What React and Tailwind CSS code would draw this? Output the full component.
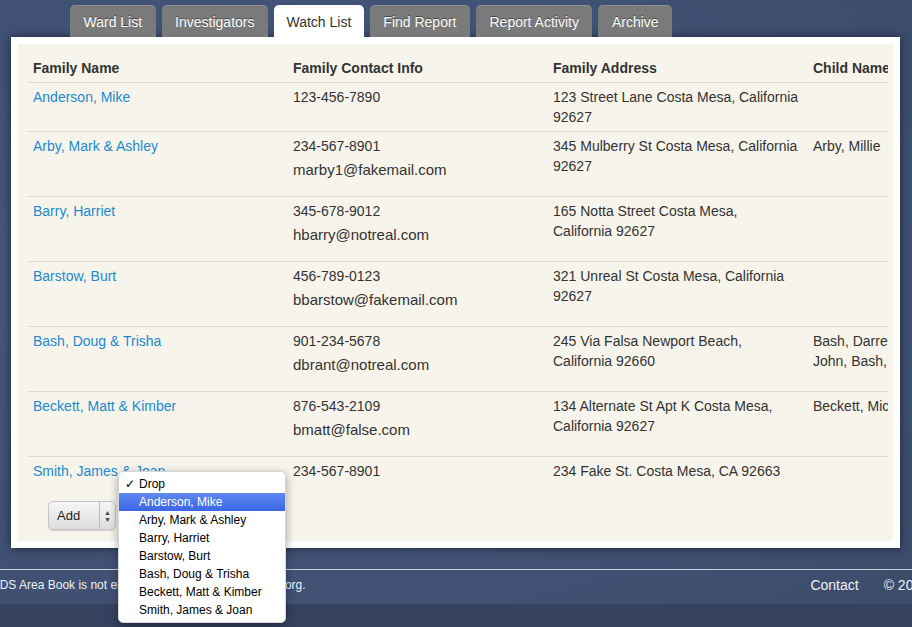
import React from "react";

const tabs = ["Ward List", "Investigators", "Watch List", "Find Report", "Report Activity", "Archive"];

const families = [
	{ name: "Anderson, Mike", phone: "123-456-7890", address: ["123 Street Lane Costa Mesa, California", "92627"], child: [] },
	{ name: "Arby, Mark & Ashley", phone: "234-567-8901", email: "marby1@fakemail.com", address: ["345 Mulberry St Costa Mesa, California", "92627"], child: ["Arby, Millie"] },
	{ name: "Barry, Harriet", phone: "345-678-9012", email: "hbarry@notreal.com", address: ["165 Notta Street Costa Mesa,", "California 92627"], child: [] },
	{ name: "Barstow, Burt", phone: "456-789-0123", email: "bbarstow@fakemail.com", address: ["321 Unreal St Costa Mesa, California", "92627"], child: [] },
	{ name: "Bash, Doug & Trisha", phone: "901-234-5678", email: "dbrant@notreal.com", address: ["245 Via Falsa Newport Beach,", "California 92660"], child: ["Bash, Darren,", "John, Bash, Emily"] },
	{ name: "Beckett, Matt & Kimber", phone: "876-543-2109", email: "bmatt@false.com", address: ["134 Alternate St Apt K Costa Mesa,", "California 92627"], child: ["Beckett, Michael"] },
	{ name: "Smith, James & Joan", phone: "234-567-8901", address: ["234 Fake St. Costa Mesa, CA 92663"], child: [] },
];

const options = [
	"Anderson, Mike",
	"Arby, Mark & Ashley",
	"Barry, Harriet",
	"Barstow, Burt",
	"Bash, Doug & Trisha",
	"Beckett, Matt & Kimber",
	"Smith, James & Joan",
];

const Tab = ({ label, active }) => (
	<div
		className={
			active
				? "h-[32px] px-[12.5px] pt-[3px] flex items-center rounded-t-[5px] bg-white text-[#333] text-[14px]"
				: "h-[32px] px-[13.5px] pt-[3px] flex items-center rounded-t-[5px] bg-[#7a7a7a] text-white text-[14px] font-medium [text-shadow:0_-1px_0_rgba(0,0,0,0.45)] shadow-[inset_0_1px_0_rgba(255,255,255,0.15)]"
		}
	>
		{label}
	</div>
);

const Row = ({ f, first }) => (
	<tr className={first ? "" : "border-t border-[#dcdad3]"}>
		<td className="pl-[5px] pt-[4px] pb-[4px] align-top leading-[20px]">
			<a className="text-[#1a8ad0]">{f.name}</a>
		</td>
		<td className="pl-[5px] pt-[4px] pb-[4px] align-top leading-[20px]">
			<div>{f.phone}</div>
			{f.email && <div className="text-[15px] leading-[27px] mb-[9px]">{f.email}</div>}
		</td>
		<td className="pl-[5px] pt-[4px] pb-[4px] align-top leading-[20px]">
			{f.address.map((a) => (
				<div key={a}>{a}</div>
			))}
		</td>
		<td className="pl-[5px] pt-[4px] pb-[4px] align-top leading-[20px] whitespace-nowrap">
			{f.child.map((c) => (
				<div key={c}>{c}</div>
			))}
		</td>
	</tr>
);

export default function App() {
	return (
		<div className="relative w-[912px] h-[627px] overflow-hidden font-['Liberation_Sans',Arial,sans-serif] bg-[radial-gradient(ellipse_at_35%_45%,#4d6187_0%,#43557a_45%,#3b4b69_100%)]">
			{/* tabs */}
			<div className="flex gap-[6px] pl-[70px] pt-[5px]">
				{tabs.map((t) => (
					<Tab key={t} label={t} active={t === "Watch List"} />
				))}
			</div>

			{/* main card */}
			<div className="mx-[11px] w-[889px] bg-white p-[7px] shadow-[0_0_10px_rgba(0,0,0,0.55)]">
				<div className="bg-[#f7f4ec] h-[497px] pt-[6px] pl-[10px] pr-[5px]">
					<div className="w-[860px] overflow-hidden">
						<table className="table-fixed w-[1040px] text-[14px] text-[#333] border-collapse">
							<colgroup>
								<col className="w-[260px]" />
								<col className="w-[260px]" />
								<col className="w-[260px]" />
								<col className="w-[260px]" />
							</colgroup>
							<thead>
								<tr className="border-b border-[#dcdad3]">
									<th className="text-left font-bold pl-[5px] pt-[8px] pb-[4px] leading-[20px] whitespace-nowrap">Family Name</th>
									<th className="text-left font-bold pl-[5px] pt-[8px] pb-[4px] leading-[20px] whitespace-nowrap">Family Contact Info</th>
									<th className="text-left font-bold pl-[5px] pt-[8px] pb-[4px] leading-[20px] whitespace-nowrap">Family Address</th>
									<th className="text-left font-bold pl-[5px] pt-[8px] pb-[4px] leading-[20px] whitespace-nowrap">Child Name</th>
								</tr>
							</thead>
							<tbody>
								{families.map((f, i) => (
									<Row key={f.name} f={f} first={i === 0} />
								))}
							</tbody>
						</table>
					</div>

					{/* add select */}
					<div className="mt-[16px] ml-[20px] w-[68px] h-[29px] flex items-center rounded-[5px] border border-[#c4c4c4] bg-[linear-gradient(#f6f6f6,#dedede)] shadow-[0_1px_1px_rgba(0,0,0,0.15)]">
						<span className="flex-1 pl-[8px] text-[13px] text-[#222]">Add</span>
						<span className="w-[16px] h-full border-l border-[#bdbdbd] flex flex-col items-center justify-center text-[#444] text-[7px] leading-[7px]">
							<span>▲</span>
							<span>▼</span>
						</span>
					</div>
				</div>
			</div>

			{/* footer */}
			<div className="mt-[21px] border-t border-[#c8cfdc]">
				<div className="h-[34px] pb-[4px] flex items-center justify-between text-[#eef1f6]">
					<span className="text-[12px] -ml-[7px] whitespace-nowrap">LDS Area Book is not endorsed by or affiliated with lds.org.</span>
					<div className="flex gap-[25px] text-[14px] whitespace-nowrap -mr-[17px]">
						<span>Contact</span>
						<span>© 2013</span>
					</div>
				</div>
				<div className="h-[40px] bg-[#34425f]" />
			</div>

			{/* open select menu */}
			<div className="absolute left-[118px] top-[471px] w-[168px] py-[3px] bg-white rounded-[5px] shadow-[0_3px_10px_rgba(0,0,0,0.35)] border border-[#d6d6d6] text-[12px] text-black">
				<div className="h-[18px] flex items-center">
					<span className="w-[20px] pl-[6px] text-[12px]">✓</span>
					<span>Drop</span>
				</div>
				{options.map((o, i) => (
					<div
						key={o}
						className={
							i === 0
								? "h-[18px] flex items-center pl-[20px] text-white bg-[linear-gradient(#6189f0,#3866e6)]"
								: "h-[18px] flex items-center pl-[20px]"
						}
					>
						{o}
					</div>
				))}
			</div>
		</div>
	);
}
